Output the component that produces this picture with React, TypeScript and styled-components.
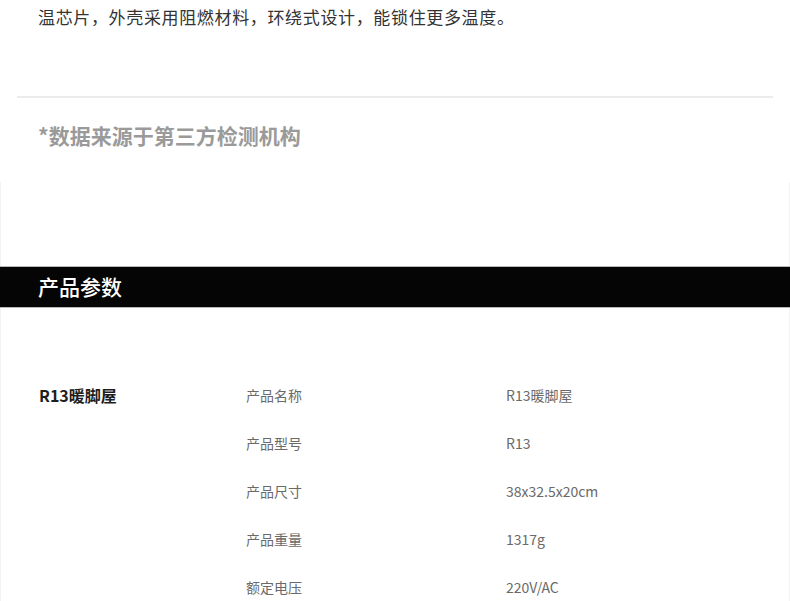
import React from "react";
import styled, { createGlobalStyle } from "styled-components";

const Global = createGlobalStyle`
  html, body { margin: 0; padding: 0; background: #fff; }
  body { font-family: "Noto Sans CJK SC", "Noto Sans", sans-serif; }
`;

const Page = styled.div`
  width: 790px;
  overflow: hidden;
`;

const Intro = styled.p`
  margin: 0;
  padding: 0 0 0 38px;
  height: 34px;
  line-height: 34px;
  font-size: 17px;
  letter-spacing: 0.65px;
  color: #333;
  white-space: nowrap;
`;

const DividerWrap = styled.div`
  padding: 0 17px;
  margin-top: 62px;
`;

const Divider = styled.div`
  height: 2px;
  background: #ececec;
`;

const Note = styled.p`
  margin: 22px 0 0;
  padding-left: 38px;
  height: 30px;
  line-height: 30px;
  font-size: 21px;
  font-weight: 700;
  color: #9a9a9a;
`;

const Framed = styled.section`
  margin-top: 32px;
  padding-top: 84px;
  border-left: 1px solid #f3f3f3;
  border-right: 1px solid #f3f3f3;
  width: 788px;
  min-height: 380px;
`;

const Band = styled.div`
  margin: 0 -1px;
  height: 37px;
  background: #050505;
  border-top: 1px solid #b8b8b8;
  border-bottom: 1px solid #b8b8b8;
  display: flex;
  align-items: center;
  padding: 0 0 3px 38px;
  color: #fff;
  font-size: 21px;
  font-weight: 500;
`;

const Specs = styled.div`
  display: grid;
  grid-template-columns: 207px 260px 1fr;
  padding: 63px 0 0 38px;
`;

const Model = styled.div`
  grid-row: 1 / span 5;
  height: 48px;
  line-height: 48px;
  font-size: 16px;
  font-weight: 700;
  color: #1e1e1e;
`;

const Cell = styled.div`
  height: 48px;
  line-height: 48px;
  font-size: 14px;
  color: #6a6a6a;
`;

const rows: [string, string][] = [
  ["产品名称", "R13暖脚屋"],
  ["产品型号", "R13"],
  ["产品尺寸", "38x32.5x20cm"],
  ["产品重量", "1317g"],
  ["额定电压", "220V/AC"],
];

export default function App() {
  return (
    <Page>
      <Global />
      <Intro>温芯片，外壳采用阻燃材料，环绕式设计，能锁住更多温度。</Intro>
      <DividerWrap>
        <Divider />
      </DividerWrap>
      <Note>*数据来源于第三方检测机构</Note>
      <Framed>
        <Band>产品参数</Band>
        <Specs>
          <Model>R13暖脚屋</Model>
          {rows.map(([k, v]) => (
            <React.Fragment key={k}>
              <Cell>{k}</Cell>
              <Cell>{v}</Cell>
            </React.Fragment>
          ))}
        </Specs>
      </Framed>
    </Page>
  );
}
